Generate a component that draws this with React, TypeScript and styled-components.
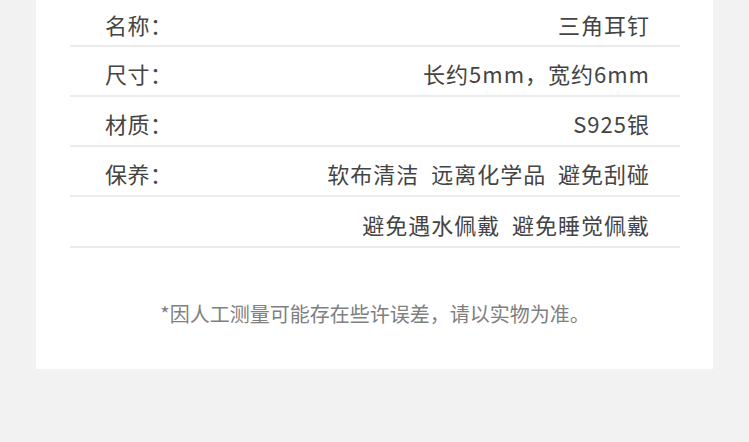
import React from "react";
import styled, { createGlobalStyle } from "styled-components";

const Global = createGlobalStyle`
  html, body { margin: 0; padding: 0; background: #f2f2f2; }
  body { font-family: "Noto Sans CJK SC", "Noto Sans", sans-serif; }
`;

const Page = styled.div`
  width: 749px;
  height: 442px;
  background: #f2f2f2;
  overflow: hidden;
`;

const Card = styled.div`
  margin-left: 36px;
  width: 677px;
  height: 369px;
  background: #ffffff;
  box-sizing: border-box;
  padding: 0 33px 0 34px;
`;

const Row = styled.div<{ $first?: boolean }>`
  display: flex;
  align-items: center;
  justify-content: space-between;
  height: ${(p) => (p.$first ? "44.5px" : "48.3px")};
  border-bottom: 2px solid #ebebeb;
  padding: 0 30px 0 35px;
  box-sizing: content-box;
`;

const Label = styled.span`
  font-size: 22px;
  color: #444444;
  letter-spacing: 0.5px;
  line-height: 1;
  padding-top: 4px;
`;

const Value = styled.span`
  font-size: 22px;
  color: #444444;
  letter-spacing: 1px;
  line-height: 1;
  padding-top: 4px;
  margin-left: auto;
  white-space: pre;
`;

const Note = styled.div`
  margin-top: 56px;
  text-align: center;
  font-size: 20px;
  line-height: 1;
  color: #808080;
`;

const rows: { label: string; value: string }[] = [
  { label: "名称：", value: "三角耳钉" },
  { label: "尺寸：", value: "长约5mm，宽约6mm" },
  { label: "材质：", value: "S925银" },
  { label: "保养：", value: "软布清洁  远离化学品  避免刮碰" },
  { label: "", value: "避免遇水佩戴  避免睡觉佩戴" },
];

export default function App() {
  return (
    <Page>
      <Global />
      <Card>
        {rows.map((r, i) => (
          <Row key={i} $first={i === 0}>
            {r.label && <Label>{r.label}</Label>}
            <Value>{r.value}</Value>
          </Row>
        ))}
        <Note>*因人工测量可能存在些许误差，请以实物为准。</Note>
      </Card>
    </Page>
  );
}
